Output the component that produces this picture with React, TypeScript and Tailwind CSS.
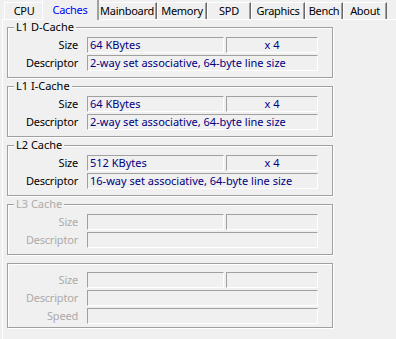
import React from 'react'

const tabs = [
  { name: 'CPU', w: 'w-[40px]' },
  { name: 'Caches', w: 'w-[50px]', active: true },
  { name: 'Mainboard', w: 'w-[60px]' },
  { name: 'Memory', w: 'w-[50px]' },
  { name: 'SPD', w: 'w-[44px]' },
  { name: 'Graphics', w: 'w-[54px]' },
  { name: 'Bench', w: 'w-[38px]' },
  { name: 'About', w: 'w-[44px]' },
]

type Row = { label: string; value?: string; count?: string; split?: boolean }

const groups: { title?: string; disabled?: boolean; rows: Row[] }[] = [
  {
    title: 'L1 D-Cache',
    rows: [
      { label: 'Size', value: '64 KBytes', count: 'x 4', split: true },
      { label: 'Descriptor', value: '2-way set associative, 64-byte line size' },
    ],
  },
  {
    title: 'L1 I-Cache',
    rows: [
      { label: 'Size', value: '64 KBytes', count: 'x 4', split: true },
      { label: 'Descriptor', value: '2-way set associative, 64-byte line size' },
    ],
  },
  {
    title: 'L2 Cache',
    rows: [
      { label: 'Size', value: '512 KBytes', count: 'x 4', split: true },
      { label: 'Descriptor', value: '16-way set associative, 64-byte line size' },
    ],
  },
  {
    title: 'L3 Cache',
    disabled: true,
    rows: [
      { label: 'Size', split: true },
      { label: 'Descriptor' },
    ],
  },
  {
    disabled: true,
    rows: [
      { label: 'Size', split: true },
      { label: 'Descriptor' },
      { label: 'Speed' },
    ],
  },
]

function Field({ className, children, center }: { className: string; children?: React.ReactNode; center?: boolean }) {
  return (
    <div
      className={
        'h-[16px] border-t border-l border-t-[#a0a0a0] border-l-[#a0a0a0] border-b border-r border-b-white border-r-white text-[#000080] leading-[14px] whitespace-nowrap overflow-hidden ' +
        (center ? 'text-center ' : 'pl-[2px] ') +
        className
      }
    >
      {children}
    </div>
  )
}

function Group({ title, disabled, rows, last }: { title?: string; disabled?: boolean; rows: Row[]; last?: boolean }) {
  return (
    <div
      className={
        'relative w-[326px] border border-[#a0a0a0] shadow-[inset_1px_1px_0_white,1px_1px_0_white] flex flex-col gap-[2px] ' +
        (last ? 'pt-[8px] pb-[3px]' : 'pt-[9px] pb-[6px]')
      }
    >
      {title && (
        <span
          className={
            'absolute left-[6px] top-[-8px] bg-[#f0f0f0] px-[2px] leading-[14px] ' +
            (disabled ? 'text-[#ababab]' : 'text-black')
          }
        >
          {title}
        </span>
      )}
      {rows.map((r) => (
        <div key={r.label} className="flex items-center">
          <div
            className={
              'w-[70px] text-right leading-[14px] tracking-[-0.2px] ' +
              (disabled ? 'text-[#ababab]' : 'text-black')
            }
          >
            {r.label}
          </div>
          <div className="ml-[9px] flex gap-[2px]">
            {r.split ? (
              <>
                <Field className="w-[137px]">{r.value}</Field>
                <Field className="w-[92px]" center>
                  {r.count}
                </Field>
              </>
            ) : (
              <Field className="w-[231px]">{r.value}</Field>
            )}
          </div>
        </div>
      ))}
    </div>
  )
}

export default function App() {
  return (
    <div
      className="w-[396px] h-[339px] bg-[#f0f0f0] overflow-hidden text-[11px]"
      style={{ fontFamily: '"Noto Sans", "DejaVu Sans", sans-serif' }}
    >
      <div className="flex items-end h-[19px] pl-[4px] tracking-[-0.3px]">
        {tabs.map((t) =>
          t.active ? (
            <div
              key={t.name}
              className={
                t.w +
                ' relative z-10 -mx-[2px] mb-[-1px] h-[20px] px-[2px] box-content bg-[#f0f0f0] border-t border-l border-white border-r-2 border-r-[#a0a0a0] flex items-center justify-center pb-[1px] text-[#0000ff] leading-none'
              }
            >
              {t.name}
            </div>
          ) : (
            <div
              key={t.name}
              className={
                t.w +
                ' h-[17px] bg-[#f0f0f0] border-t border-l border-white border-r border-r-[#696969] shadow-[inset_-1px_0_0_#a0a0a0] flex items-center justify-center pb-[1px] text-black leading-none'
              }
            >
              {t.name}
            </div>
          )
        )}
      </div>
      <div className="ml-[2px] h-[320px] border-t border-l border-white pl-[4px] pt-[7px] flex flex-col gap-[8px]">
        {groups.map((g, i) => (
          <Group key={i} {...g} last={i === groups.length - 1} />
        ))}
      </div>
    </div>
  )
}
